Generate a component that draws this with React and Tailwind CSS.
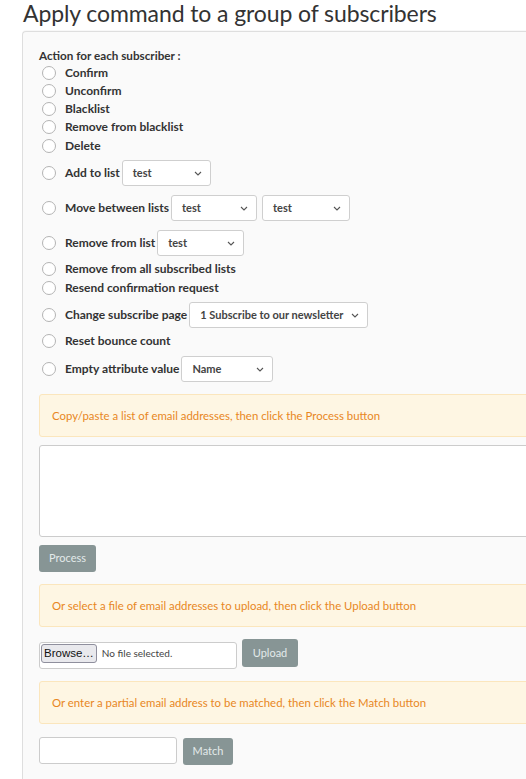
import React from "react";

const font = { fontFamily: "Lato, 'Open Sans', sans-serif" };

function Radio() {
  return <span className="inline-block w-[14px] h-[14px] rounded-full border border-[#b4b4b4] bg-white shrink-0 ml-[3px] mr-[9px]" />;
}

function Chevron() {
  return (
    <svg width="8" height="5" viewBox="0 0 8 5" className="shrink-0">
      <path d="M1 1 L4 4 L7 1" fill="none" stroke="#555" strokeWidth="1.1" />
    </svg>
  );
}

function Select({ w, text }) {
  return (
    <div className={`h-[26px] ${w} border border-[#cfcfcf] rounded-[3px] bg-white flex items-center justify-between pl-[10px] pr-[8px] text-[11px] font-bold text-[#444]`}>
      <span>{text}</span>
      <Chevron />
    </div>
  );
}

function Row({ label, className = "" }) {
  return (
    <div className={`flex items-center h-[18px] ${className}`}>
      <Radio />
      <span className="text-[12px] font-bold text-[#333] whitespace-nowrap">{label}</span>
    </div>
  );
}

function SelRow({ label, className = "", children }) {
  return (
    <div className={`flex items-center h-[26px] ${className}`}>
      <Radio />
      <span className="text-[12px] font-bold text-[#333] whitespace-nowrap mr-[2px]">{label}</span>
      {children}
    </div>
  );
}

function Alert({ children, className = "" }) {
  return (
    <div className={`h-[43px] w-[520px] border border-[#fbe6bd] bg-[#fef6e3] rounded-[3px] flex items-center pl-[12px] text-[11.4px] text-[#e8871e] ${className}`}>
      {children}
    </div>
  );
}

function Btn({ w, children, className = "" }) {
  return (
    <div className={`h-[27px] ${w} rounded-[3px] bg-[#879595] text-[#e3eaea] text-[11px] flex items-center justify-center ${className}`}>
      {children}
    </div>
  );
}

export default function App() {
  return (
    <div className="w-[526px] h-[779px] overflow-hidden bg-white" style={font}>
      <h1 className="h-[31px] pl-[23px] text-[23px] leading-[27px] text-[#333] font-normal tracking-[-0.1px]">
        Apply command to a group of subscribers
      </h1>
      <div className="ml-[22px] w-[560px] h-[760px] border-l border-t border-[#dedede] rounded-tl-[4px] bg-[#fafafa] pl-[16px] pt-[15px] shadow-[0_-1px_1px_rgba(0,0,0,0.03)]">
        <div className="h-[17px] flex items-center text-[11.7px] font-bold text-[#333]">Action for each subscriber :</div>
        <Row label="Confirm" />
        <Row label="Unconfirm" />
        <Row label="Blacklist" />
        <Row label="Remove from blacklist" />
        <Row label="Delete" className="mt-[1px]" />
        <SelRow label="Add to list" className="mt-[5px]">
          <Select w="w-[89px]" text="test" />
        </SelRow>
        <SelRow label="Move between lists" className="mt-[9px]">
          <Select w="w-[86px]" text="test" />
          <div className="w-[5px]" />
          <Select w="w-[88px]" text="test" />
        </SelRow>
        <SelRow label="Remove from list" className="mt-[9px]">
          <Select w="w-[87px]" text="test" />
        </SelRow>
        <Row label="Remove from all subscribed lists" className="mt-[4px]" />
        <Row label="Resend confirmation request" className="mt-[1px]" />
        <SelRow label="Change subscribe page" className="mt-[5px]">
          <Select w="w-[179px]" text="1 Subscribe to our newsletter" />
        </SelRow>
        <Row label="Reset bounce count" className="mt-[4px]" />
        <SelRow label="Empty attribute value" className="mt-[6px]">
          <Select w="w-[92px]" text="Name" />
        </SelRow>

        <Alert className="mt-[12px]">Copy/paste a list of email addresses, then click the Process button</Alert>
        <div className="mt-[8px] h-[92px] w-[520px] border border-[#cccccc] rounded-[3px] bg-white" />
        <Btn w="w-[57px]" className="mt-[8px]">Process</Btn>

        <Alert className="mt-[12px]">Or select a file of email addresses to upload, then click the Upload button</Alert>
        <div className="mt-[12px] flex items-start">
          <div className="mt-[3px] h-[27px] w-[198px] border border-[#cccccc] rounded-[3px] bg-white flex items-start pl-[1px] pt-[1px]">
            <div className="h-[19px] px-[2px] border border-[#8f8f9d] rounded-[3px] bg-[#e9e9ed] text-[11.5px] leading-[17px] text-[#111]" style={{ fontFamily: "'Liberation Sans', Arial, sans-serif" }}>Browse…</div>
            <span className="ml-[5px] text-[10px] leading-[18px] text-[#444]">No file selected.</span>
          </div>
          <Btn w="w-[56px]" className="ml-[5px] h-[28px]">Upload</Btn>
        </div>

        <Alert className="mt-[12px]">Or enter a partial email address to be matched, then click the Match button</Alert>
        <div className="mt-[13px] flex items-start">
          <div className="h-[27px] w-[138px] border border-[#cccccc] rounded-[3px] bg-white" />
          <Btn w="w-[50px]" className="ml-[6px] mt-[1px]">Match</Btn>
        </div>
      </div>
    </div>
  );
}
